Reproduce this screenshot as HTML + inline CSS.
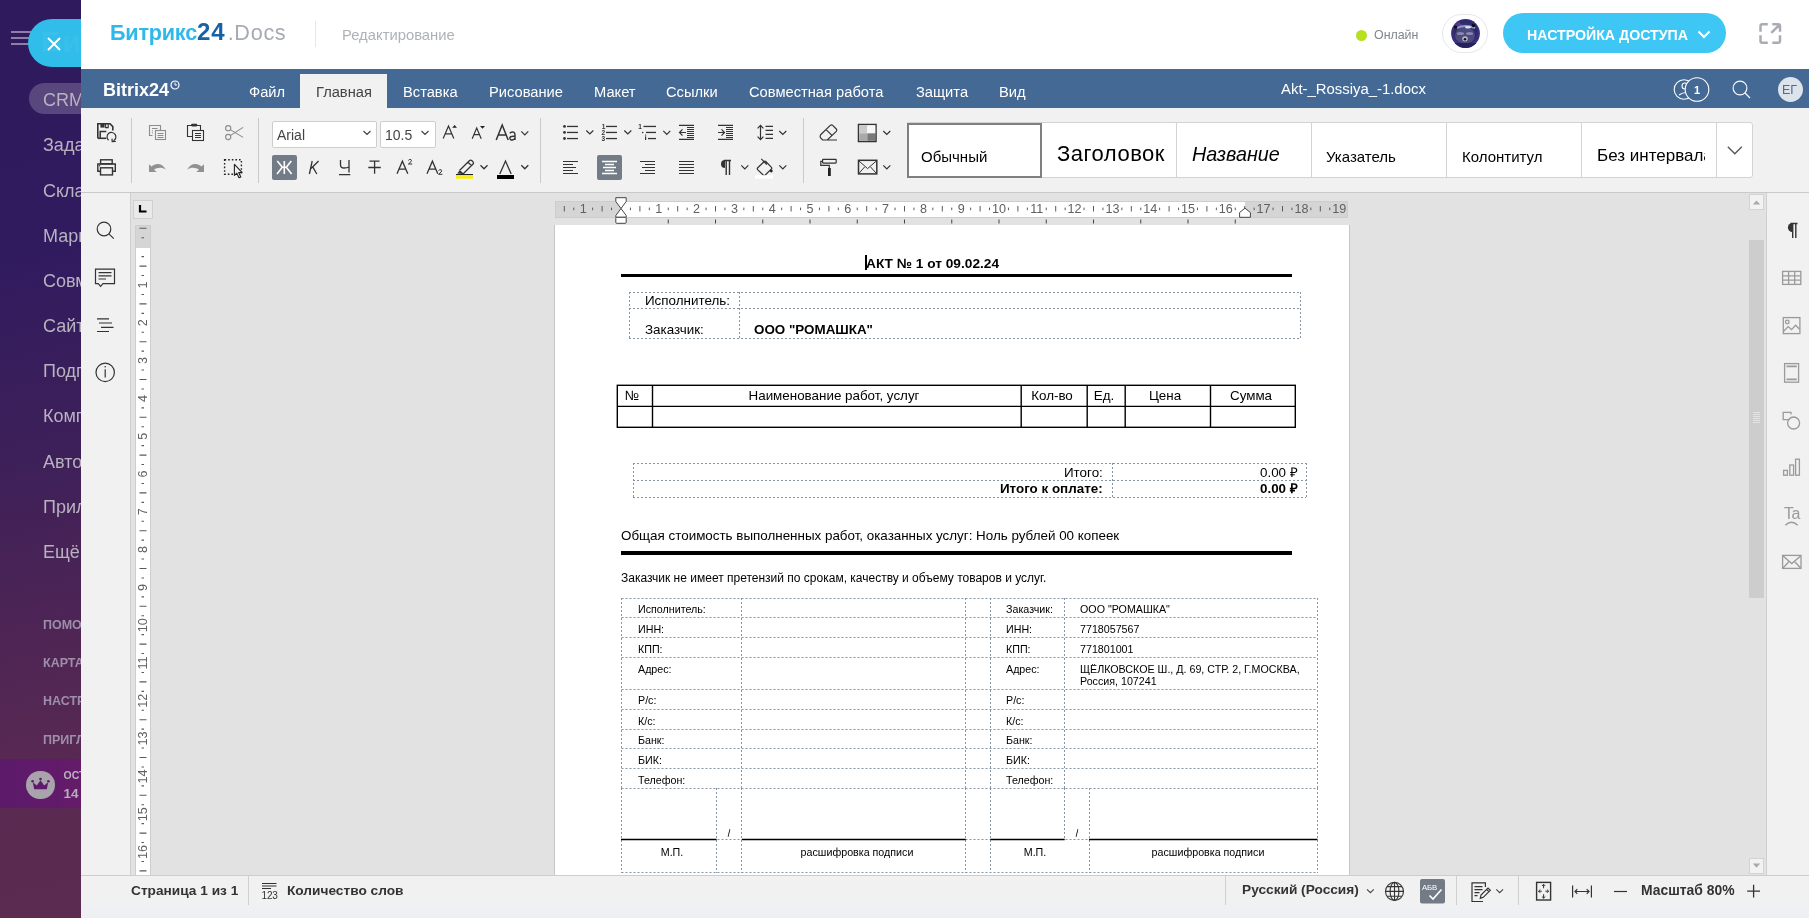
<!DOCTYPE html>
<html><head><meta charset="utf-8">
<style>
*{box-sizing:border-box;margin:0;padding:0}
html,body{width:1809px;height:918px;overflow:hidden;background:#fff;font-family:"Liberation Sans",sans-serif}
body>*{will-change:transform}
.a{position:absolute}
.t{position:absolute;white-space:nowrap;line-height:1}
svg{position:absolute;overflow:visible}
#sb{left:0;top:0;width:81px;height:918px;background:linear-gradient(168deg,#2e1a5d 0%,#311b5f 28%,#3e2059 50%,#512654 72%,#5b2a52 88%,#5c2b50 100%)}
.mi{position:absolute;left:43px;font-size:18px;color:#b9b2c0}
.ms{position:absolute;left:43px;font-size:12.5px;font-weight:bold;color:#9d8fa9}
#hdr{left:81px;top:0;width:1728px;height:69px;background:#fff}
#menu{left:81px;top:69px;width:1728px;height:39px;background:#446995}
.tab{position:absolute;top:85px;font-size:14.7px;color:#fff}
#tb{left:81px;top:108px;width:1728px;height:85px;background:#f1f1f1;border-bottom:1px solid #c9c9c9}
#lp{left:81px;top:193px;width:50px;height:682px;background:#f1f1f1;border-right:1px solid #cfcfcf}
#doc{left:131px;top:193px;width:1636px;height:682px;background:#e2e2e2}
#rp{left:1766px;top:193px;width:43px;height:682px;background:#f1f1f1;border-left:1px solid #cfcfcf}
#st{left:81px;top:875px;width:1728px;height:43px;background:linear-gradient(#f1f1f1 0,#f1f1f1 30px,#eef0f3 30px);border-top:1px solid #cdcdcd}
#page{left:554px;top:225px;width:796px;height:650px;background:#fff;border-left:1px solid #c6c6c6;border-right:1px solid #c6c6c6}
.dt{position:absolute;white-space:nowrap;line-height:1;color:#000;font-size:13.4px}
</style></head><body>
<div id="sb" class="a"></div>
<div id="sbc">
<div class="a" style="left:11px;top:31.3px;width:20px;height:2px;background:#8d7fa5"></div>
<div class="a" style="left:11px;top:37.3px;width:20px;height:2px;background:#8d7fa5"></div>
<div class="a" style="left:11px;top:43.3px;width:20px;height:2px;background:#8d7fa5"></div>
<div class="a" style="left:29px;top:83px;width:70px;height:31px;border-radius:16px;background:rgba(255,255,255,0.2)"></div>
<div class="mi t" style="top:90.7px">CRM</div>
<div class="mi t" style="top:136.3px">Задачи и Проекты</div>
<div class="mi t" style="top:181.5px">Склад</div>
<div class="mi t" style="top:226.6px">Маркетинг</div>
<div class="mi t" style="top:271.8px">Совместная работа</div>
<div class="mi t" style="top:317.0px">Сайты и Магазины</div>
<div class="mi t" style="top:362.2px">Подписки</div>
<div class="mi t" style="top:407.3px">Компания</div>
<div class="mi t" style="top:452.5px">Автоматизация</div>
<div class="mi t" style="top:497.7px">Приложения</div>
<div class="mi t" style="top:542.8px">Ещё</div>
<div class="ms t" style="top:618.7px">ПОМОЩЬ</div>
<div class="ms t" style="top:657.0px">КАРТА САЙТА</div>
<div class="ms t" style="top:695.4px">НАСТРОИТЬ МЕНЮ</div>
<div class="ms t" style="top:733.7px">ПРИГЛАСИТЬ</div>
<div class="a" style="left:0;top:759px;width:81px;height:49px;background:linear-gradient(90deg,#5c1a6b,#641b6a)"></div>
<div class="a" style="left:26px;top:770.5px;width:28.5px;height:28.5px;border-radius:50%;background:#a9a4ab"></div>
<svg style="left:30px;top:776px" width="21" height="17" viewBox="0 0 21 17"><path d="M4.2 13.2 L2.8 6.2 L6.8 9.6 L10.5 4.2 L14.2 9.6 L18.2 6.2 L16.8 13.2 Z" fill="#5f1a6b"/><circle cx="2.6" cy="5.3" r="1.3" fill="#5f1a6b"/><circle cx="10.5" cy="3" r="1.3" fill="#5f1a6b"/><circle cx="18.4" cy="5.3" r="1.3" fill="#5f1a6b"/></svg>
<div class="t" style="left:63.5px;top:769.5px;font-size:10.5px;font-weight:bold;color:#bdb3c2">ОСТАЛОСЬ</div>
<div class="t" style="left:63.5px;top:786.5px;font-size:13.5px;font-weight:bold;color:#b8aeba">14 ДНЕЙ</div>
</div>
<div class="a" style="left:28px;top:19px;width:60px;height:48px;border-radius:24px 0 0 24px;background:#31bdea"></div>
<div class="t" style="left:41px;top:27px;font-size:30px;font-weight:bold;color:rgba(255,255,255,0.035)">Би</div>
<svg style="left:47px;top:37px" width="14" height="14" viewBox="0 0 14 14"><path d="M1 1 L13 13 M13 1 L1 13" stroke="#fff" stroke-width="2"/></svg>

<div id="hdr" class="a"></div>
<div class="t" style="left:110px;top:21.5px;font-size:21.6px;font-weight:bold;color:#2fb8ea;letter-spacing:-0.2px">Битрикс<span style="color:#1762a6;font-size:24px;letter-spacing:1px;line-height:0">24</span><span style="font-weight:normal;color:#a6abb2;letter-spacing:0.7px;margin-left:2px">.Docs</span></div>
<div class="a" style="left:315px;top:21px;width:1px;height:26px;background:#e6e8ea"></div>
<div class="t" style="left:342px;top:28px;font-size:14.8px;color:#aeb2b7">Редактирование</div>
<div class="a" style="left:1356px;top:29.5px;width:11px;height:11px;border-radius:50%;background:#b7e11c"></div>
<div class="t" style="left:1374px;top:28.5px;font-size:12.4px;color:#80868e">Онлайн</div>
<div class="a" style="left:1442px;top:14px;width:46px;height:38.5px;border-radius:19.5px;border:1px solid #e3e6ea;background:#fff"></div>
<svg style="left:1451px;top:19px" width="29" height="29" viewBox="0 0 29 29"><defs><clipPath id="avc"><circle cx="14.5" cy="14.5" r="14.4"/></clipPath><radialGradient id="avg" cx="0.5" cy="0.45" r="0.6"><stop offset="0" stop-color="#55508a"/><stop offset="0.6" stop-color="#2c2868"/><stop offset="1" stop-color="#4a3a9a"/></radialGradient></defs>
<g clip-path="url(#avc)"><rect width="29" height="29" fill="url(#avg)"/>
<path d="M0 8 L8 3 L14 9 Z" fill="#6a4aa0" opacity="0.6"/>
<ellipse cx="14" cy="16.5" rx="10" ry="8" fill="#4d4a7e"/>
<ellipse cx="9.5" cy="14.5" rx="3.6" ry="1.6" fill="#8886b0"/><ellipse cx="18.5" cy="14.5" rx="3.6" ry="1.6" fill="#8886b0"/>
<ellipse cx="14" cy="19.8" rx="2.8" ry="2.6" fill="#b9b8cc"/>
<circle cx="14" cy="20.2" r="1.3" fill="#111"/>
<path d="M6 9 Q14 5 24 9" stroke="#8d9ad0" stroke-width="2" fill="none"/>
<ellipse cx="17" cy="8.3" rx="3" ry="1.3" fill="#d8e4f4"/>
<circle cx="4.5" cy="8" r="1.8" fill="#111"/><circle cx="22.5" cy="6.5" r="1.8" fill="#111"/>
<rect x="0" y="24" width="29" height="5" fill="#25215a"/>
</g></svg>
<div class="a" style="left:1503px;top:13px;width:223px;height:40px;border-radius:20px;background:#3ec7f4"></div>
<div class="t" style="left:1526.5px;top:28px;font-size:14.2px;font-weight:bold;color:#fff">НАСТРОЙКА ДОСТУПА</div>
<svg style="left:1697px;top:30px" width="14" height="9" viewBox="0 0 14 9"><path d="M1.5 1.5 L7 7 L12.5 1.5" stroke="#fff" stroke-width="2" fill="none"/></svg>
<svg style="left:0;top:0" width="1809" height="69"><path d="M1767.8 24.3 H1762.3 Q1760.5 24.3 1760.5 26.1 V31.8 M1772.3 24.3 H1778.2 Q1780 24.3 1780 26.1 V31.8 M1760.5 35.2 V40.9 Q1760.5 42.7 1762.3 42.7 H1767.8 M1780 35.2 V40.9 Q1780 42.7 1778.2 42.7 H1772.3 M1771.3 32.8 L1779.2 25.2" stroke="#a9adb3" stroke-width="2.5" fill="none"/></svg>

<div id="menu" class="a"></div>
<div class="t" style="left:103px;top:81.3px;font-size:18px;font-weight:bold;color:#fff;letter-spacing:0px">Bitrix24</div>
<svg style="left:170px;top:80px" width="10" height="10" viewBox="0 0 10 10"><circle cx="5" cy="5" r="4" stroke="#fff" stroke-width="1.2" fill="none"/><path d="M5 2.5 V5 H7" stroke="#fff" stroke-width="1" fill="none"/></svg>
<div class="a" style="left:300px;top:74px;width:87px;height:34px;background:#f1f1f1"></div>
<div class="tab t" style="left:248.8px">Файл</div>
<div class="tab t" style="left:315.8px;color:#444">Главная</div>
<div class="tab t" style="left:402.5px">Вставка</div>
<div class="tab t" style="left:488.7px">Рисование</div>
<div class="tab t" style="left:594.2px">Макет</div>
<div class="tab t" style="left:666.3px">Ссылки</div>
<div class="tab t" style="left:749px">Совместная работа</div>
<div class="tab t" style="left:916.2px">Защита</div>
<div class="tab t" style="left:999.1px">Вид</div>
<div class="t" style="left:1280.6px;top:81.6px;font-size:14.9px;color:#fff">Akt-_Rossiya_-1.docx</div>
<svg style="left:1673px;top:78px" width="38" height="24" viewBox="0 0 38 24"><circle cx="11" cy="11.5" r="9.8" stroke="#fff" stroke-width="1.1" fill="none"/><path d="M6 17 Q11 13.5 17 15" stroke="#fff" stroke-width="1.1" fill="none"/><circle cx="12" cy="8" r="3" stroke="#fff" stroke-width="1.1" fill="none"/><circle cx="24" cy="11.5" r="11.8" stroke="#fff" stroke-width="1.1" fill="#446995"/><text x="24" y="15.6" font-family="Liberation Sans" font-size="11" font-weight="bold" fill="#fff" text-anchor="middle">1</text></svg>
<svg style="left:1731px;top:80px" width="22" height="22" viewBox="0 0 22 22"><circle cx="9" cy="8" r="6.9" stroke="#fff" stroke-width="1.1" fill="none"/><path d="M14 13 L19 18" stroke="#fff" stroke-width="1.1"/></svg>
<div class="a" style="left:1778px;top:77px;width:25px;height:25px;border-radius:50%;background:#dde3ea"></div>
<div class="t" style="left:1782px;top:83.5px;font-size:12.5px;color:#53698a">ЕГ</div>

<div id="tb" class="a"></div>
<!--TB-->
<svg style="left:0;top:0" width="1809" height="918">
<g fill="none" stroke="#333" stroke-width="2">
<!-- save -->
<path d="M97.8 138.3 V123.8 H110 L112.8 126.6 V130.6" stroke-width="1.6"/>
<path d="M106.3 138.3 H97.8" stroke-width="1.6"/>
<path d="M100.2 138.3 V131.6 H106.3" stroke-width="1.5"/>
<rect x="100.4" y="123.8" width="4.2" height="3.8" fill="#333" stroke="none"/>
<path d="M105.6 123.8 V127.6 H108.2 V123.8" stroke-width="1.1"/>
</g>
<path d="M108.6 140.2 A4.4 4.4 0 1 1 113.4 140.8" fill="none" stroke="#333" stroke-width="1.2"/>
<path d="M112 138.6 L112.2 141.6 L115.8 141.5" fill="none" stroke="#333" stroke-width="1.2"/>
<!-- print -->
<g fill="none" stroke="#333" stroke-width="1.4">
<rect x="100.6" y="159.8" width="11.6" height="4"/>
<path d="M100.3 171.3 H97.8 V164 H115.3 V171.3 H112.7"/>
<rect x="100.5" y="167.8" width="12" height="7.1" fill="#f1f1f1"/>
</g>
<circle cx="99.6" cy="165.8" r="0.7" fill="#333"/>
<!-- seps -->
<rect x="131" y="118" width="1" height="65" fill="#c9c9c9"/>
<rect x="258" y="118" width="1" height="65" fill="#c9c9c9"/>
<rect x="540" y="118" width="1" height="65" fill="#c9c9c9"/>
<rect x="803" y="118" width="1" height="65" fill="#c9c9c9"/>
<!-- copy gray -->
<g fill="none" stroke="#8c8c8c" stroke-width="1.1">
<path d="M152.5 135.5 H149.5 V125.5 H160.5 V130.5"/>
<rect x="155.5" y="130.5" width="10" height="9"/>
<path d="M152 128.5 H157.5" stroke-width="1"/>
<path d="M157.5 133.5 H163.5 M157.5 135.5 H163.5 M157.5 137.5 H163.5" stroke-width="1"/>
</g>
<circle cx="152.4" cy="130.8" r="0.6" fill="#8c8c8c"/><circle cx="152.4" cy="132.8" r="0.6" fill="#8c8c8c"/>
<!-- paste -->
<g fill="none" stroke="#333" stroke-width="1.1">
<path d="M192.5 136.5 H187.5 V125.5 H200.5 V130.5"/>
<rect x="192.5" y="130.5" width="11" height="10"/>
<path d="M195 133.5 H201 M195 135.5 H201 M195 137.5 H201" stroke-width="1.2"/>
</g>
<rect x="191.2" y="123.8" width="6" height="2.6" rx="0.8" fill="#333"/>
<!-- cut gray -->
<g fill="none" stroke="#8c8c8c" stroke-width="1.1">
<circle cx="228.2" cy="128.2" r="2.6"/><circle cx="228.2" cy="137" r="2.6"/>
<path d="M230.3 129.6 L243.1 137.4 M230.3 135.6 L243.1 127.4"/>
</g>
<!-- undo/redo -->
<path d="M149 164.2 V172 H156.8 L154 169.7 C157.3 167.3 162 167 165.9 169.6 C162.3 162.6 155.3 162.6 151.5 166.6 Z" fill="#919191"/>
<path d="M204 164.2 V172 H196.2 L199 169.7 C195.7 167.3 191 167 187.1 169.6 C190.7 162.6 197.7 162.6 201.5 166.6 Z" fill="#919191"/>
<!-- select -->
<path d="M224.6 159.8 H241.4 V174.2 H224.6 Z" fill="none" stroke="#222" stroke-width="1.4" stroke-dasharray="1.6 2"/>
<path d="M234.4 164.3 L234.4 175.4 L236.8 173.2 L239 177.8 L240.8 177 L238.7 172.5 L242 172.4 Z" fill="#f1f1f1" stroke="#222" stroke-width="1.1" stroke-linejoin="round"/>
</svg>
<!-- font combos -->
<div class="a" style="left:272px;top:120.5px;width:105px;height:27px;background:#fff;border:1px solid #cdcdcd;border-radius:2px"></div>
<div class="t" style="left:277px;top:128px;font-size:14px;color:#444">Arial</div>
<div class="a" style="left:379.5px;top:120.5px;width:56px;height:27px;background:#fff;border:1px solid #cdcdcd;border-radius:2px"></div>
<div class="t" style="left:385px;top:128px;font-size:14px;color:#444">10.5</div>
<div class="a" style="left:272px;top:155px;width:25px;height:25px;background:#737c86;border-radius:2px"></div>
<svg style="left:0;top:0" width="1809" height="918">
<g fill="none" stroke="#444" stroke-width="1.2">
<path d="M363.5 131 L367 134.5 L370.5 131 M421.5 131 L425 134.5 L428.5 131"/>
</g>
<g fill="none" stroke="#333" stroke-width="1.2">
<!-- A up -->
<path d="M443.2 138.6 L448.5 126 L453.8 138.6 M445.2 133.8 H451.8"/>
<!-- A down -->
<path d="M472.2 138.8 L476.7 128 L481.2 138.8 M473.9 134.6 H479.5"/>
<!-- Aa -->
<path d="M496.2 140 L502.2 125 L508.2 140 M498.4 135 H506" stroke-width="1.5"/>
<path d="M509.8 133.3 Q511.5 131.3 513.6 132.2 Q515 133 515 135 V140 M515 136.3 Q510.2 135.8 509.8 138 Q510 140.3 512.5 140 Q514.5 139.6 515 138" stroke-width="1.4"/>
<path d="M521.3 131.3 L524.8 134.8 L528.3 131.3"/>
</g>
<path d="M452.2 127.8 L454.6 125 L457 127.8 Z M480 126 L482.5 128.8 L485 126 Z" fill="#222"/>
<!-- Zh -->
<g fill="none" stroke="#fff" stroke-width="1.6">
<path d="M284.3 161 V174 M277.3 161 L282.3 167.3 L277 174 M291.3 161 L286.3 167.3 L291.6 174 M282.3 167.3 H286.3"/>
</g>
<g fill="none" stroke="#333" stroke-width="1.3">
<!-- K italic -->
<path d="M312.2 161 L309.4 174 M318.6 161 L311 168.5 M312.6 166.6 L316.8 174"/>
<!-- Ch underline -->
<path d="M340.5 160 V165 Q340.6 168 344 168 Q347 168 349 167 M349 160 V172.5 M339 174.6 H350.3"/>
<!-- strike T -->
<path d="M369.5 161.2 H379.5 M368.3 167.5 H380.8 M374.6 161.2 V173.8"/>
<!-- A sup -->
<path d="M397 173.8 L402.4 161.2 L407.8 173.8 M399 169.2 H405.8"/>
<path d="M408.3 160.4 Q409.5 159 411 159.6 Q412 160.4 411 161.7 L408.4 164 H412.2" stroke-width="1"/>
<!-- A sub -->
<path d="M427 173.8 L432.4 161.2 L437.8 173.8 M429 169.2 H435.8"/>
<path d="M438.5 170.6 Q439.7 169.2 441.2 169.8 Q442.2 170.6 441.2 171.9 L438.6 174.3 H442.4" stroke-width="1"/>
<!-- pencil -->
<path d="M459.5 170.5 L469.3 160.8 Q470.6 159.4 472 160.8 L472.8 161.6 Q474.2 163 472.8 164.3 L463 174 M468 162.2 L471.5 165.6 M459.5 170.5 L463 174"/>
<path d="M480.5 165.3 L484 168.8 L487.5 165.3 M521.3 165.3 L524.8 168.8 L528.3 165.3"/>
<!-- A color -->
<path d="M499.8 174 L505.5 161 L511.2 174"/>
</g>
<path d="M459.5 170.5 L457.2 173.5 L463 174 Z" fill="#333"/>
<rect x="456" y="174" width="17" height="1.2" fill="#222"/>
<rect x="456" y="175.2" width="17" height="3.6" fill="#f5ee1c"/>
<rect x="497" y="175" width="17" height="4" fill="#000"/>
</svg>
<div class="a" style="left:597px;top:155px;width:25px;height:25px;background:#737c86;border-radius:2px"></div>
<svg style="left:0;top:0" width="1809" height="918">
<g fill="#333">
<circle cx="564.5" cy="126.4" r="1.4"/><circle cx="564.5" cy="132.4" r="1.4"/><circle cx="564.5" cy="138.5" r="1.4"/>
<rect x="567" y="125.8" width="11" height="1.3"/><rect x="567" y="131.8" width="11" height="1.3"/><rect x="567" y="137.9" width="11" height="1.3"/>
<rect x="606" y="125.8" width="11" height="1.3"/><rect x="606" y="131.8" width="11" height="1.3"/><rect x="606" y="137.9" width="11" height="1.3"/>
<rect x="643.5" y="125.8" width="12.5" height="1.3"/><rect x="646" y="131.8" width="10" height="1.3"/><rect x="648" y="137.9" width="8" height="1.3"/>
<circle cx="642.7" cy="132.5" r="0.8"/>
<rect x="645" y="136.4" width="1.2" height="3.6"/><rect x="645" y="134.6" width="1.2" height="1"/>
</g>
<g font-family="Liberation Sans" font-size="6.5" font-weight="bold" fill="#333">
<text x="601.8" y="129.2">1</text><text x="601.6" y="135.2">2</text><text x="601.6" y="141.2">3</text>
<text x="638.3" y="129.2">1</text>
</g>
<g fill="none" stroke="#333" stroke-width="1.2">
<path d="M586.3 130.5 L589.8 134 L593.3 130.5 M624.3 130.5 L627.8 134 L631.3 130.5 M663.3 130.8 L666.8 134.3 L670.3 130.8 M779.3 131 L782.8 134.5 L786.3 131 M883.3 131 L886.8 134.5 L890.3 131"/>
<path d="M741.3 165.3 L744.8 168.8 L748.3 165.3 M779.3 165.3 L782.8 168.8 L786.3 165.3 M883.3 165.3 L886.8 168.8 L890.3 165.3"/>
<!-- outdent -->
<path d="M679 125.4 H694 M679 139.4 H694 M687 127.5 H694 M687 129.5 H694 M687 131.5 H694 M687 133.5 H694 M687 135.5 H694 M687 137.5 H694"/>
<path d="M679.5 132.5 H686 M682.5 129.3 L679.5 132.5 L682.5 135.7"/>
<!-- indent -->
<path d="M718 125.4 H733 M718 139.4 H733 M726 127.5 H733 M726 129.5 H733 M726 131.5 H733 M726 133.5 H733 M726 135.5 H733 M726 137.5 H733"/>
<path d="M718 132.5 H724.5 M721.5 129.3 L724.5 132.5 L721.5 135.7"/>
<!-- line spacing -->
<path d="M760.5 125.5 V139.5 M757.6 128.3 L760.5 125.3 L763.4 128.3 M757.6 136.7 L760.5 139.7 L763.4 136.7 M765.5 126.3 H773 M765.5 130.3 H773 M765.5 134.3 H773 M765.5 138.3 H773"/>
<!-- eraser -->
<path d="M820.6 134.8 L830.3 125.4 Q831.5 124.3 832.7 125.4 L836.3 129 Q837.4 130.2 836.3 131.4 L827.3 140 H822.6 L820.6 138 Q819.6 136 820.6 134.8 Z M826.1 129.6 L832.2 135.6 M827.3 140 H837"/>
<!-- align left -->
<path d="M563 161.5 H578 M563 164.5 H573 M563 167.5 H576 M563 170.5 H573 M563 173.5 H578"/>
<path d="M640 161.5 H655 M645 164.5 H655 M642 167.5 H655 M645 170.5 H655 M640 173.5 H655"/>
<path d="M679 161.5 H694 M679 164.5 H694 M679 167.5 H694 M679 170.5 H694 M679 173.5 H694"/>
<!-- bucket -->
<path d="M757.5 168 L764.2 161.5 Q765 160.7 765.8 161.5 L771.5 167.3 Q772.3 168.1 771.5 168.9 L765 175.3 Q764.2 176 763.4 175.3 L757.6 169.6 Q756.8 168.8 757.5 168 Z M761.3 158.8 L766.8 164.5"/>
<!-- envelope -->
<rect x="858.5" y="160.3" width="18.3" height="13.6" stroke-width="1.5"/>
<path d="M859 161 L867.6 168.6 L876.3 161 M859 173.3 L864.6 167 M876.3 173.3 L870.6 167" stroke-width="1"/>
<!-- roller -->
<rect x="822.6" y="159.3" width="13.6" height="3.8" rx="0.5" stroke-width="1.2"/>
<path d="M822.6 161.3 H820.8 V165.4 H829.3 V168" stroke-width="1.2"/>
</g>
<g stroke="#fff" stroke-width="1.3">
<path d="M602 161.5 H617 M605 164.5 H614 M603 167.5 H616 M605 170.5 H614 M602 173.5 H617"/>
</g>
<rect x="828" y="168" width="2.8" height="8" fill="#222"/>
<circle cx="771.3" cy="171" r="1.4" fill="#222"/>
<rect x="755" y="175.2" width="18" height="3.5" fill="#fff"/>
<!-- pilcrow -->
<path d="M725 160 A4 4 0 0 0 725 168 Z" fill="#333"/>
<path d="M724 160.5 H731 M726.2 160.5 V175 M729.5 160.5 V175" stroke="#333" stroke-width="1.4" fill="none"/>
<!-- shading -->
<rect x="858.5" y="124.5" width="17.5" height="17" fill="#fff" stroke="#333" stroke-width="1.5"/>
<rect x="859.3" y="125.3" width="8" height="8" fill="#cacaca"/><rect x="867.3" y="125.3" width="8" height="8" fill="#f7f7f7"/>
<rect x="859.3" y="133.3" width="8" height="7.5" fill="#a9a9a9"/><rect x="867.3" y="133.3" width="8" height="7.5" fill="#7a7a7a"/>
</svg>
<div class="a" style="left:907px;top:122px;width:846px;height:56px;background:#fff;border:1px solid #d3d3d3;border-radius:0 3px 3px 0"></div>
<div class="a" style="left:1176px;top:123px;width:1px;height:54px;background:#d3d3d3"></div>
<div class="a" style="left:1311px;top:123px;width:1px;height:54px;background:#d3d3d3"></div>
<div class="a" style="left:1446px;top:123px;width:1px;height:54px;background:#d3d3d3"></div>
<div class="a" style="left:1581px;top:123px;width:1px;height:54px;background:#d3d3d3"></div>
<div class="a" style="left:1716px;top:123px;width:1px;height:54px;background:#d3d3d3"></div>
<div class="a" style="left:907px;top:122.5px;width:134.5px;height:55px;border:2px solid #7f7f7f"></div>
<div class="t" style="left:921px;top:149px;font-size:15px;color:#000">Обычный</div>
<div class="t" style="left:1056.5px;top:142.9px;font-size:22px;color:#000;letter-spacing:0.5px">Заголовок</div>
<div class="t" style="left:1191.5px;top:144.8px;font-size:19.8px;font-style:italic;color:#000">Название</div>
<div class="t" style="left:1326px;top:149px;font-size:15px;color:#000">Указатель</div>
<div class="t" style="left:1461.5px;top:149px;font-size:15px;color:#000">Колонтитул</div>
<div class="a" style="left:1596px;top:140px;width:109px;height:30px;overflow:hidden"><div class="t" style="left:1px;top:7.2px;font-size:17px;color:#000">Без интервала</div></div>
<svg style="left:1727px;top:146px" width="16" height="9" viewBox="0 0 16 9"><path d="M0.8 0.8 L7.8 7.8 L14.8 0.8" stroke="#555" stroke-width="1.3" fill="none"/></svg>

<!--/TB-->

<div id="lp" class="a"></div>
<div id="doc" class="a"></div>
<div id="rp" class="a"></div>
<div id="st" class="a"></div>
<div id="page" class="a"></div>
<!--DOC-->
<svg style="left:0;top:0" width="1809" height="918">
<path d="M629 292.5 H1301" stroke="#8795a6" stroke-width="1" stroke-dasharray="2 2" fill="none"/>
<path d="M629 308.5 H1301" stroke="#8795a6" stroke-width="1" stroke-dasharray="2 2" fill="none"/>
<path d="M629 338.5 H1301" stroke="#8795a6" stroke-width="1" stroke-dasharray="2 2" fill="none"/>
<path d="M629.5 292 V339" stroke="#8795a6" stroke-width="1" stroke-dasharray="2 2" fill="none"/>
<path d="M739.5 292 V339" stroke="#8795a6" stroke-width="1" stroke-dasharray="2 2" fill="none"/>
<path d="M1300.5 292 V339" stroke="#8795a6" stroke-width="1" stroke-dasharray="2 2" fill="none"/>
<g stroke="#000" stroke-width="1.4" fill="none">
<rect x="617.3" y="385.3" width="678" height="42"/>
<path d="M617.3 406.4 H1295.3 M652.5 385.3 V427.3 M1021.2 385.3 V427.3 M1087.2 385.3 V427.3 M1125.2 385.3 V427.3 M1210.5 385.3 V427.3"/>
</g>
<path d="M633 463.5 H1306" stroke="#8795a6" stroke-width="1" stroke-dasharray="2 2" fill="none"/>
<path d="M633 480.5 H1306" stroke="#8795a6" stroke-width="1" stroke-dasharray="2 2" fill="none"/>
<path d="M633 497.5 H1306" stroke="#8795a6" stroke-width="1" stroke-dasharray="2 2" fill="none"/>
<path d="M633.5 463 V498" stroke="#8795a6" stroke-width="1" stroke-dasharray="2 2" fill="none"/>
<path d="M1112.5 463 V498" stroke="#8795a6" stroke-width="1" stroke-dasharray="2 2" fill="none"/>
<path d="M1306.5 463 V498" stroke="#8795a6" stroke-width="1" stroke-dasharray="2 2" fill="none"/>
<path d="M621.5 598.5 H1317.5" stroke="#8795a6" stroke-width="1" stroke-dasharray="2 2" fill="none"/>
<path d="M621.5 617.5 H1317.5" stroke="#8795a6" stroke-width="1" stroke-dasharray="2 2" fill="none"/>
<path d="M621.5 637.5 H1317.5" stroke="#8795a6" stroke-width="1" stroke-dasharray="2 2" fill="none"/>
<path d="M621.5 657.5 H1317.5" stroke="#8795a6" stroke-width="1" stroke-dasharray="2 2" fill="none"/>
<path d="M621.5 689.5 H1317.5" stroke="#8795a6" stroke-width="1" stroke-dasharray="2 2" fill="none"/>
<path d="M621.5 709.5 H1317.5" stroke="#8795a6" stroke-width="1" stroke-dasharray="2 2" fill="none"/>
<path d="M621.5 729.5 H1317.5" stroke="#8795a6" stroke-width="1" stroke-dasharray="2 2" fill="none"/>
<path d="M621.5 748.5 H1317.5" stroke="#8795a6" stroke-width="1" stroke-dasharray="2 2" fill="none"/>
<path d="M621.5 768.5 H1317.5" stroke="#8795a6" stroke-width="1" stroke-dasharray="2 2" fill="none"/>
<path d="M621.5 788.5 H1317.5" stroke="#8795a6" stroke-width="1" stroke-dasharray="2 2" fill="none"/>
<path d="M621.5 872.5 H1317.5" stroke="#8795a6" stroke-width="1" stroke-dasharray="2 2" fill="none"/>
<path d="M621.5 839.5 H1317.5" stroke="#8795a6" stroke-width="1" stroke-dasharray="2 2" fill="none"/>
<path d="M621.5 598 V789" stroke="#8795a6" stroke-width="1" stroke-dasharray="2 2" fill="none"/>
<path d="M741.5 598 V789" stroke="#8795a6" stroke-width="1" stroke-dasharray="2 2" fill="none"/>
<path d="M965.5 598 V789" stroke="#8795a6" stroke-width="1" stroke-dasharray="2 2" fill="none"/>
<path d="M990.5 598 V789" stroke="#8795a6" stroke-width="1" stroke-dasharray="2 2" fill="none"/>
<path d="M1064.5 598 V789" stroke="#8795a6" stroke-width="1" stroke-dasharray="2 2" fill="none"/>
<path d="M1317.5 598 V789" stroke="#8795a6" stroke-width="1" stroke-dasharray="2 2" fill="none"/>
<path d="M621.5 788 V873" stroke="#8795a6" stroke-width="1" stroke-dasharray="2 2" fill="none"/>
<path d="M716.5 788 V873" stroke="#8795a6" stroke-width="1" stroke-dasharray="2 2" fill="none"/>
<path d="M741.5 788 V873" stroke="#8795a6" stroke-width="1" stroke-dasharray="2 2" fill="none"/>
<path d="M965.5 788 V873" stroke="#8795a6" stroke-width="1" stroke-dasharray="2 2" fill="none"/>
<path d="M990.5 788 V873" stroke="#8795a6" stroke-width="1" stroke-dasharray="2 2" fill="none"/>
<path d="M1089.5 788 V873" stroke="#8795a6" stroke-width="1" stroke-dasharray="2 2" fill="none"/>
<path d="M1317.5 788 V873" stroke="#8795a6" stroke-width="1" stroke-dasharray="2 2" fill="none"/>
<path d="M1064.5 788 V840" stroke="#8795a6" stroke-width="1" stroke-dasharray="2 2" fill="none"/>
<path d="M621 839.5 H716.6 M741.9 839.5 H965.8 M990.4 839.5 H1064.7 M1089 839.5 H1317.5" stroke="#000" stroke-width="1.4" fill="none"/>
</svg>
<div class="a" style="left:865px;top:255px;width:1.5px;height:15px;background:#000"></div>
<div class="dt" style="left:866.2px;top:257.3px;font-size:13.7px;font-weight:bold;">АКТ № 1 от 09.02.24</div>
<div class="a" style="left:621px;top:274px;width:671px;height:3px;background:#000"></div>
<div class="dt" style="left:644.5px;top:293.7px;font-size:13.4px;">Исполнитель:</div>
<div class="dt" style="left:644.5px;top:323.3px;font-size:13.4px;">Заказчик:</div>
<div class="dt" style="left:754.3px;top:323.3px;font-size:13.4px;font-weight:bold;">ООО "РОМАШКА"</div>
<div class="dt" style="left:632.1px;top:388.7px;font-size:13.4px;transform:translateX(-50%);">№</div>
<div class="dt" style="left:834.4px;top:388.7px;font-size:13.4px;transform:translateX(-50%);">Наименование работ, услуг</div>
<div class="dt" style="left:1052.0px;top:388.7px;font-size:13.4px;transform:translateX(-50%);">Кол-во</div>
<div class="dt" style="left:1104.3px;top:388.7px;font-size:13.4px;transform:translateX(-50%);">Ед.</div>
<div class="dt" style="left:1165.3px;top:388.7px;font-size:13.4px;transform:translateX(-50%);">Цена</div>
<div class="dt" style="left:1250.5px;top:388.7px;font-size:13.4px;transform:translateX(-50%);">Сумма</div>
<div class="dt" style="right:706.0px;top:465.6px;font-size:13.4px;">Итого:</div>
<div class="dt" style="right:511.6px;top:465.6px;font-size:13.4px;">0.00 ₽</div>
<div class="dt" style="right:706.0px;top:482.4px;font-size:13.4px;font-weight:bold;">Итого к оплате:</div>
<div class="dt" style="right:511.6px;top:482.4px;font-size:13.4px;font-weight:bold;">0.00 ₽</div>
<div class="dt" style="left:621.2px;top:528.7px;font-size:13.4px;">Общая стоимость выполненных работ, оказанных услуг: Ноль рублей 00 копеек</div>
<div class="a" style="left:621px;top:551px;width:671px;height:4px;background:#000"></div>
<div class="dt" style="left:621.2px;top:571.5px;font-size:12.0px;">Заказчик не имеет претензий по срокам, качеству и объему товаров и услуг.</div>
<div class="dt" style="left:637.6px;top:603.7px;font-size:10.7px;">Исполнитель:</div>
<div class="dt" style="left:1006.2px;top:603.7px;font-size:10.7px;">Заказчик:</div>
<div class="dt" style="left:637.6px;top:623.7px;font-size:10.7px;">ИНН:</div>
<div class="dt" style="left:1006.2px;top:623.7px;font-size:10.7px;">ИНН:</div>
<div class="dt" style="left:637.6px;top:643.7px;font-size:10.7px;">КПП:</div>
<div class="dt" style="left:1006.2px;top:643.7px;font-size:10.7px;">КПП:</div>
<div class="dt" style="left:637.6px;top:663.5px;font-size:10.7px;">Адрес:</div>
<div class="dt" style="left:1006.2px;top:663.5px;font-size:10.7px;">Адрес:</div>
<div class="dt" style="left:637.6px;top:695.4px;font-size:10.7px;">Р/с:</div>
<div class="dt" style="left:1006.2px;top:695.4px;font-size:10.7px;">Р/с:</div>
<div class="dt" style="left:637.6px;top:715.7px;font-size:10.7px;">К/с:</div>
<div class="dt" style="left:1006.2px;top:715.7px;font-size:10.7px;">К/с:</div>
<div class="dt" style="left:637.6px;top:735.2px;font-size:10.7px;">Банк:</div>
<div class="dt" style="left:1006.2px;top:735.2px;font-size:10.7px;">Банк:</div>
<div class="dt" style="left:637.6px;top:754.7px;font-size:10.7px;">БИК:</div>
<div class="dt" style="left:1006.2px;top:754.7px;font-size:10.7px;">БИК:</div>
<div class="dt" style="left:637.6px;top:774.7px;font-size:10.7px;">Телефон:</div>
<div class="dt" style="left:1006.2px;top:774.7px;font-size:10.7px;">Телефон:</div>
<div class="dt" style="left:1080.2px;top:603.7px;font-size:10.7px;">ООО "РОМАШКА"</div>
<div class="dt" style="left:1080.2px;top:623.7px;font-size:10.7px;">7718057567</div>
<div class="dt" style="left:1080.2px;top:643.7px;font-size:10.7px;">771801001</div>
<div class="dt" style="left:1080.2px;top:663.5px;font-size:10.7px;">ЩЁЛКОВСКОЕ Ш., Д. 69, СТР. 2, Г.МОСКВА,</div>
<div class="dt" style="left:1080.2px;top:675.7px;font-size:10.7px;">Россия, 107241</div>
<div class="dt" style="left:728.5px;top:828.4px;font-size:10.7px;transform:translateX(-50%);">/</div>
<div class="dt" style="left:1076.8px;top:828.4px;font-size:10.7px;transform:translateX(-50%);">/</div>
<div class="dt" style="left:671.9px;top:846.9px;font-size:10.7px;transform:translateX(-50%);">М.П.</div>
<div class="dt" style="left:857.4px;top:846.9px;font-size:10.7px;transform:translateX(-50%);">расшифровка подписи</div>
<div class="dt" style="left:1034.8px;top:846.9px;font-size:10.7px;transform:translateX(-50%);">М.П.</div>
<div class="dt" style="left:1207.5px;top:846.9px;font-size:10.7px;transform:translateX(-50%);">расшифровка подписи</div>
<!--/DOC-->
<!--RUL-->
<div class="a" style="left:555px;top:201px;width:793px;height:17px;background:#d5d5d5;border:1px solid #cdcdcd"></div>
<div class="a" style="left:621px;top:202px;width:623.5px;height:15px;background:#fff"></div>
<div class="a" style="left:135px;top:225px;width:16px;height:650px;background:#fff;border:1px solid #cdcdcd;border-bottom:none"></div><div class="a" style="left:136px;top:226px;width:14px;height:21.5px;background:#d5d5d5"></div>
<div class="a" style="left:133px;top:200px;width:19.5px;height:19px;background:#e9e9e9;border:1px solid #d0d0d0"></div><svg style="left:138px;top:204px" width="10" height="10" viewBox="0 0 10 10"><path d="M2 1 V7.5 H8.5" stroke="#000" stroke-width="2.2" fill="none"/></svg>
<svg style="left:0;top:0" width="1809" height="918">
<path d="M564.30 206 V211.5 M573.75 207.6 V210.2 M592.65 207.6 V210.2 M602.10 206 V211.5 M611.55 207.6 V210.2 M630.45 207.6 V210.2 M639.90 206 V211.5 M649.35 207.6 V210.2 M668.25 207.6 V210.2 M677.70 206 V211.5 M687.15 207.6 V210.2 M706.05 207.6 V210.2 M715.50 206 V211.5 M724.95 207.6 V210.2 M743.85 207.6 V210.2 M753.30 206 V211.5 M762.75 207.6 V210.2 M781.65 207.6 V210.2 M791.10 206 V211.5 M800.55 207.6 V210.2 M819.45 207.6 V210.2 M828.90 206 V211.5 M838.35 207.6 V210.2 M857.25 207.6 V210.2 M866.70 206 V211.5 M876.15 207.6 V210.2 M895.05 207.6 V210.2 M904.50 206 V211.5 M913.95 207.6 V210.2 M932.85 207.6 V210.2 M942.30 206 V211.5 M951.75 207.6 V210.2 M970.65 207.6 V210.2 M980.10 206 V211.5 M989.55 207.6 V210.2 M1008.45 207.6 V210.2 M1017.90 206 V211.5 M1027.35 207.6 V210.2 M1046.25 207.6 V210.2 M1055.70 206 V211.5 M1065.15 207.6 V210.2 M1084.05 207.6 V210.2 M1093.50 206 V211.5 M1102.95 207.6 V210.2 M1121.85 207.6 V210.2 M1131.30 206 V211.5 M1140.75 207.6 V210.2 M1159.65 207.6 V210.2 M1169.10 206 V211.5 M1178.55 207.6 V210.2 M1197.45 207.6 V210.2 M1206.90 206 V211.5 M1216.35 207.6 V210.2 M1235.25 207.6 V210.2 M1244.70 206 V211.5 M1254.15 207.6 V210.2 M1273.05 207.6 V210.2 M1282.50 206 V211.5 M1291.95 207.6 V210.2 M1310.85 207.6 V210.2 M1320.30 206 V211.5 M1329.75 207.6 V210.2" stroke="#5a5a5a" stroke-width="1" fill="none"/>
<g font-family="Liberation Sans" font-size="12.6" fill="#606060"><text x="583.2" y="213.2" text-anchor="middle">1</text><text x="658.8" y="213.2" text-anchor="middle">1</text><text x="696.6" y="213.2" text-anchor="middle">2</text><text x="734.4" y="213.2" text-anchor="middle">3</text><text x="772.2" y="213.2" text-anchor="middle">4</text><text x="810.0" y="213.2" text-anchor="middle">5</text><text x="847.8" y="213.2" text-anchor="middle">6</text><text x="885.6" y="213.2" text-anchor="middle">7</text><text x="923.4" y="213.2" text-anchor="middle">8</text><text x="961.2" y="213.2" text-anchor="middle">9</text><text x="999.0" y="213.2" text-anchor="middle">10</text><text x="1036.8" y="213.2" text-anchor="middle">11</text><text x="1074.6" y="213.2" text-anchor="middle">12</text><text x="1112.4" y="213.2" text-anchor="middle">13</text><text x="1150.2" y="213.2" text-anchor="middle">14</text><text x="1188.0" y="213.2" text-anchor="middle">15</text><text x="1225.8" y="213.2" text-anchor="middle">16</text><text x="1263.6" y="213.2" text-anchor="middle">17</text><text x="1301.4" y="213.2" text-anchor="middle">18</text><text x="1339.2" y="213.2" text-anchor="middle">19</text></g>
<path d="M668.25 219.5 V223.5 M715.50 219.5 V223.5 M762.75 219.5 V223.5 M810.00 219.5 V223.5 M857.25 219.5 V223.5 M904.50 219.5 V223.5 M951.75 219.5 V223.5 M999.00 219.5 V223.5 M1046.25 219.5 V223.5 M1093.50 219.5 V223.5 M1140.75 219.5 V223.5 M1188.00 219.5 V223.5 M1235.25 219.5 V223.5" stroke="#444" stroke-width="1" fill="none"/>
<path d="M615.8 198.2 Q615.3 197.7 616 197.7 H626 Q626.7 197.7 626.2 198.2 V201.5 L621 208.5 L615.8 201.5 Z" fill="#fff" stroke="#444" stroke-width="1"/>
<path d="M621 208.5 L626.2 215.5 V217.3 H615.8 V215.5 Z" fill="#fff" stroke="#444" stroke-width="1"/>
<rect x="615.8" y="217.3" width="10.4" height="6" rx="0.8" fill="#fff" stroke="#444" stroke-width="1"/>
<path d="M1239.6 217.3 V212.5 L1245 208.2 L1250.4 212.5 V217.3 Z" fill="#fff" stroke="#444" stroke-width="1"/>
<path d="M139.5 228.30 H146.5 M141.5 237.75 H144 M141.5 256.65 H144 M139.5 266.10 H146.5 M141.5 275.55 H144 M141.5 294.45 H144 M139.5 303.90 H146.5 M141.5 313.35 H144 M141.5 332.25 H144 M139.5 341.70 H146.5 M141.5 351.15 H144 M141.5 370.05 H144 M139.5 379.50 H146.5 M141.5 388.95 H144 M141.5 407.85 H144 M139.5 417.30 H146.5 M141.5 426.75 H144 M141.5 445.65 H144 M139.5 455.10 H146.5 M141.5 464.55 H144 M141.5 483.45 H144 M139.5 492.90 H146.5 M141.5 502.35 H144 M141.5 521.25 H144 M139.5 530.70 H146.5 M141.5 540.15 H144 M141.5 559.05 H144 M139.5 568.50 H146.5 M141.5 577.95 H144 M141.5 596.85 H144 M139.5 606.30 H146.5 M141.5 615.75 H144 M141.5 634.65 H144 M139.5 644.10 H146.5 M141.5 653.55 H144 M141.5 672.45 H144 M139.5 681.90 H146.5 M141.5 691.35 H144 M141.5 710.25 H144 M139.5 719.70 H146.5 M141.5 729.15 H144 M141.5 748.05 H144 M139.5 757.50 H146.5 M141.5 766.95 H144 M141.5 785.85 H144 M139.5 795.30 H146.5 M141.5 804.75 H144 M141.5 823.65 H144 M139.5 833.10 H146.5 M141.5 842.55 H144 M141.5 861.45 H144 M139.5 870.90 H146.5" stroke="#5a5a5a" stroke-width="1.1" fill="none"/>
<g font-family="Liberation Sans" font-size="12.6" fill="#606060"><text x="0" y="0" transform="translate(147.4 285.0) rotate(-90)" text-anchor="middle">1</text><text x="0" y="0" transform="translate(147.4 322.8) rotate(-90)" text-anchor="middle">2</text><text x="0" y="0" transform="translate(147.4 360.6) rotate(-90)" text-anchor="middle">3</text><text x="0" y="0" transform="translate(147.4 398.4) rotate(-90)" text-anchor="middle">4</text><text x="0" y="0" transform="translate(147.4 436.2) rotate(-90)" text-anchor="middle">5</text><text x="0" y="0" transform="translate(147.4 474.0) rotate(-90)" text-anchor="middle">6</text><text x="0" y="0" transform="translate(147.4 511.8) rotate(-90)" text-anchor="middle">7</text><text x="0" y="0" transform="translate(147.4 549.6) rotate(-90)" text-anchor="middle">8</text><text x="0" y="0" transform="translate(147.4 587.4) rotate(-90)" text-anchor="middle">9</text><text x="0" y="0" transform="translate(147.4 625.2) rotate(-90)" text-anchor="middle">10</text><text x="0" y="0" transform="translate(147.4 663.0) rotate(-90)" text-anchor="middle">11</text><text x="0" y="0" transform="translate(147.4 700.8) rotate(-90)" text-anchor="middle">12</text><text x="0" y="0" transform="translate(147.4 738.6) rotate(-90)" text-anchor="middle">13</text><text x="0" y="0" transform="translate(147.4 776.4) rotate(-90)" text-anchor="middle">14</text><text x="0" y="0" transform="translate(147.4 814.2) rotate(-90)" text-anchor="middle">15</text><text x="0" y="0" transform="translate(147.4 852.0) rotate(-90)" text-anchor="middle">16</text></g>
</svg>
<!--/RUL-->
<!--PAN-->
<svg style="left:0;top:0" width="1809" height="918">
<g fill="none" stroke="#333" stroke-width="1.2">
<circle cx="104" cy="229" r="6.8"/><path d="M108.9 233.9 L113.8 238.6"/>
<path d="M95.5 269.2 H114.5 V283.6 H103 L100.6 286.4 L98.2 283.6 H95.5 Z"/>
<path d="M98.5 272.6 H111.5 M98.5 275.8 H111.5 M98.5 279 H106"/>
<path d="M97 318.8 H109 M99 323 H112 M101 327.3 H113.5 M97 331.5 H109"/>
<circle cx="105.2" cy="372.4" r="9.2"/><path d="M105.2 369.3 V377.5"/>
</g>
<circle cx="105.2" cy="366.8" r="0.8" fill="#333"/>
<!-- right panel -->
<path d="M1792.5 223 A4.6 4.6 0 0 0 1792.5 232.2 Z" fill="#333"/>
<path d="M1790.5 223.5 H1797.5 M1792.7 223.5 V238 M1795.8 223.5 V238" stroke="#333" stroke-width="1.4" fill="none"/>
<g fill="none" stroke="#9a9a9a" stroke-width="1.3">
<rect x="1782.6" y="271.4" width="18.2" height="13"/>
<path d="M1782.6 275.8 H1800.8 M1782.6 280.2 H1800.8 M1788.6 271.4 V284.4 M1794.7 271.4 V284.4"/>
<rect x="1783.3" y="317.6" width="16.6" height="16"/>
<circle cx="1787.3" cy="322" r="1.8"/>
<path d="M1783.6 331.3 L1788.2 326.6 L1791.5 329.6 L1795.6 325.2 L1799.6 329.3"/>
<rect x="1784.6" y="363.6" width="14" height="18.6"/>
<path d="M1786.5 366.4 H1796.8 M1786.5 379.4 H1796.8" stroke-width="1.6"/>
<path d="M1789.5 419.6 H1783.2 V412.4 H1791 V414.5"/>
<circle cx="1793.6" cy="423" r="6"/>
<rect x="1783.6" y="470.4" width="3.8" height="4.8"/><rect x="1789.8" y="465" width="3.8" height="10.2"/><rect x="1795.6" y="459.2" width="3.8" height="16"/>
<path d="M1785.3 525.3 Q1791.5 519.2 1797.7 525.3"/>
<rect x="1782.6" y="555.4" width="18.4" height="13"/>
<path d="M1783 556 L1791.8 563.6 L1800.6 556 M1783 568 L1788.6 562 M1800.6 568 L1795 562"/>
</g>
<g font-family="Liberation Sans" font-size="16" fill="#9a9a9a"><text x="1784" y="518.5" letter-spacing="-0.5">Ta</text></g>
<!-- scrollbar -->
<rect x="1749.5" y="194.5" width="14" height="15" fill="#f2f2f2" stroke="#d3d3d3" stroke-width="1"/>
<path d="M1752.8 204.6 L1756.5 200.4 L1760.2 204.6 Z" fill="#a9a9a9"/>
<rect x="1749" y="240" width="15" height="358" fill="#cdcdcd"/>
<path d="M1753 412.5 H1760 M1753 414.5 H1760 M1753 416.5 H1760 M1753 418.5 H1760 M1753 420.5 H1760 M1753 422.5 H1760" stroke="#e4e4e4" stroke-width="1"/>
<rect x="1749.5" y="858.5" width="14" height="15" fill="#f2f2f2" stroke="#d3d3d3" stroke-width="1"/>
<path d="M1752.8 863.5 L1756.5 867.7 L1760.2 863.5 Z" fill="#a9a9a9"/>
<!-- status bar -->
<rect x="248" y="876" width="1" height="29" fill="#d0d0d0"/>
<rect x="1225" y="876" width="1" height="29" fill="#d0d0d0"/>
<rect x="1456" y="876" width="1" height="29" fill="#d0d0d0"/>
<rect x="1518" y="876" width="1" height="29" fill="#d0d0d0"/>
<path d="M262 883.5 H276.5 M262 886 H276.5 M262 888.5 H271" stroke="#333" stroke-width="1.1" fill="none"/>
<g font-family="Liberation Sans" font-size="10" fill="#333"><text x="261.6" y="899" letter-spacing="-0.2">123</text></g>
<path d="M1367 889.3 L1370.4 892.7 L1373.8 889.3 M1496.3 889.3 L1499.7 892.7 L1503.1 889.3" stroke="#444" stroke-width="1.1" fill="none"/>
<g fill="none" stroke="#333" stroke-width="1.1">
<circle cx="1394.5" cy="891.4" r="9"/>
<ellipse cx="1394.5" cy="891.4" rx="4.4" ry="9"/>
<path d="M1394.5 882.4 V900.4 M1385.5 891.4 H1403.5 M1387 886.6 H1402 M1387 896.2 H1402"/>
</g>
<rect x="1420" y="879" width="25" height="24.5" rx="2" fill="#737c86"/>
<g font-family="Liberation Sans" font-size="7.8" fill="#fff"><text x="1422" y="890" letter-spacing="-0.2">АБВ</text></g>
<path d="M1429.5 895.5 L1433 899 L1441.5 889.5" stroke="#fff" stroke-width="1.6" fill="none"/>
<g fill="none" stroke="#333" stroke-width="1.2">
<path d="M1483 901.5 H1472 V882.8 H1485.4 V887"/>
<path d="M1474.5 886.6 H1482.5 M1474.5 889.6 H1482.5 M1474.5 892.6 H1479.5 M1474.5 895.6 H1477.5"/>
<path d="M1480.3 898.4 L1481 895 L1488 888 L1490.3 890.3 L1483.3 897.3 Z M1486.6 889.4 L1488.9 891.7"/>
<rect x="1536.6" y="882.4" width="14" height="17.6" stroke-width="1.4"/>
<path d="M1543.6 884.3 V888.3 M1541.9 886 L1543.6 884.3 L1545.3 886 M1543.6 894.2 V898.2 M1541.9 896.5 L1543.6 898.2 L1545.3 896.5 M1538.6 891.2 H1541.8 M1540.3 889.5 L1538.6 891.2 L1540.3 892.9 M1545.4 891.2 H1548.6 M1546.9 889.5 L1548.6 891.2 L1546.9 892.9" stroke-width="1"/>
<path d="M1572.6 885.5 V897.5 M1591.4 885.5 V897.5 M1575 891.5 H1589 M1577.3 889.2 L1575 891.5 L1577.3 893.8 M1586.7 889.2 L1589 891.5 L1586.7 893.8"/>
<path d="M1614 891.5 H1627"/>
<path d="M1747.2 891.2 H1760 M1753.6 884.8 V897.6" stroke-width="1.3"/>
</g>
</svg>
<div class="t" style="left:131.4px;top:883.7px;font-size:13.7px;font-weight:bold;color:#333">Страница 1 из 1</div>
<div class="t" style="left:287.3px;top:883.7px;font-size:13.7px;font-weight:bold;color:#333">Количество слов</div>
<div class="t" style="left:1242.4px;top:883.3px;font-size:13.7px;font-weight:bold;color:#333">Русский (Россия)</div>
<div class="t" style="left:1640.6px;top:884.2px;font-size:13.9px;font-weight:bold;color:#333">Масштаб 80%</div>

<!--/PAN-->

</body></html>
